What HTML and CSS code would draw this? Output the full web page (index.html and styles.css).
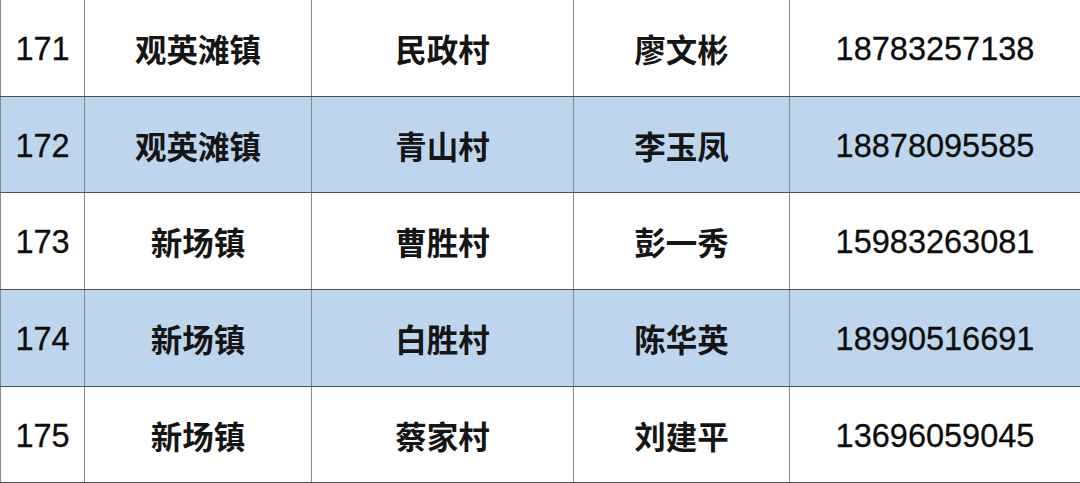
FILE: index.html
```html
<!DOCTYPE html>
<html lang="zh">
<head>
<meta charset="utf-8">
<link rel="stylesheet" href="styles.css">
</head>
<body>
<div class="table">
  <div class="row r97"><div class="c num">171</div><div class="c">观英滩镇</div><div class="c">民政村</div><div class="c">廖文彬</div><div class="c num">18783257138</div></div>
  <div class="row r96 blue"><div class="c num">172</div><div class="c">观英滩镇</div><div class="c">青山村</div><div class="c">李玉凤</div><div class="c num">18878095585</div></div>
  <div class="row r97"><div class="c num">173</div><div class="c">新场镇</div><div class="c">曹胜村</div><div class="c">彭一秀</div><div class="c num">15983263081</div></div>
  <div class="row r97 blue"><div class="c num">174</div><div class="c">新场镇</div><div class="c">白胜村</div><div class="c">陈华英</div><div class="c num">18990516691</div></div>
  <div class="row r96"><div class="c num">175</div><div class="c">新场镇</div><div class="c">蔡家村</div><div class="c">刘建平</div><div class="c num">13696059045</div></div>
</div>
</body>
</html>
```
FILE: styles.css
```css
html, body {
  margin: 0;
  padding: 0;
  background: #fff;
}
.table {
  width: 1080px;
  display: flex;
  flex-direction: column;
}
.row {
  display: grid;
  grid-template-columns: 84px 227px 262px 216px 291px;
  border-bottom: 1px solid #4f4f4f;
  box-sizing: border-box;
}
.r97 { height: 97px; }
.r96 { height: 96px; }
.blue { background: #bed6ed; }
.c {
  display: flex;
  align-items: center;
  justify-content: center;
  border-left: 1px solid #8a8a8a;
  font-family: "Noto Sans CJK SC", sans-serif;
  font-weight: 700;
  font-size: 31.5px;
  color: #151515;
  padding-top: 0;
  box-sizing: border-box;
}
.c.num {
  font-family: "Liberation Sans", Arial, sans-serif;
  font-weight: 400;
  font-size: 32.5px;
  color: #0d0d0d;
  padding-top: 3px;
  -webkit-text-stroke: 0.3px #0d0d0d;
}
```
